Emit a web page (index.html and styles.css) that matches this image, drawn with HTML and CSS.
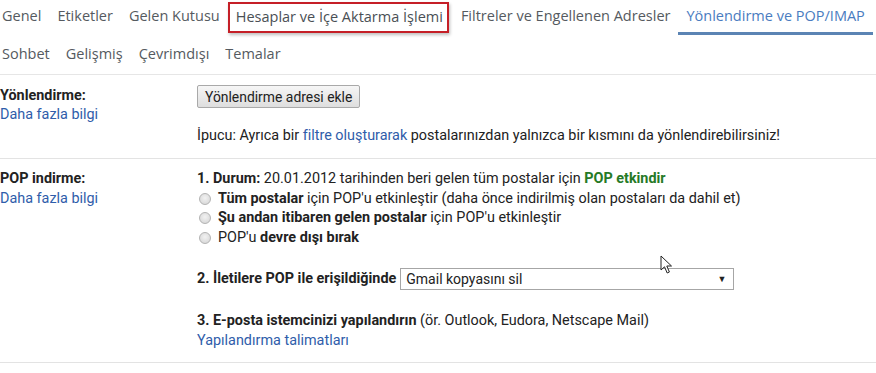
FILE: index.html
```html
<!DOCTYPE html>
<html lang="tr">
<head>
<meta charset="utf-8">
<title>Ayarlar</title>
<link rel="stylesheet" href="styles.css">
</head>
<body>
<div class="page">
  <nav class="tabs">
    <div class="tab-row first">
      <span class="tab">Genel</span>
      <span class="tab">Etiketler</span>
      <span class="tab">Gelen Kutusu</span>
      <span class="tab boxed">Hesaplar ve İçe Aktarma İşlemi</span>
      <span class="tab">Filtreler ve Engellenen Adresler</span>
      <span class="tab active">Yönlendirme ve POP/IMAP</span>
    </div>
    <div class="tab-row second">
      <span class="tab">Sohbet</span>
      <span class="tab">Gelişmiş</span>
      <span class="tab">Çevrimdışı</span>
      <span class="tab">Temalar</span>
    </div>
  </nav>

  <section class="setting fwd">
    <div class="label">
      <div class="title">Yönlendirme:</div>
      <a class="link">Daha fazla bilgi</a>
    </div>
    <div class="content">
      <button class="btn">Yönlendirme adresi ekle</button>
      <p class="tip">İpucu: Ayrıca bir <a class="link">filtre oluşturarak</a> postalarınızdan yalnızca bir kısmını da yönlendirebilirsiniz!</p>
    </div>
  </section>

  <section class="setting pop">
    <div class="label">
      <div class="title">POP indirme:</div>
      <a class="link">Daha fazla bilgi</a>
    </div>
    <div class="content">
      <div class="line"><b>1. Durum:</b> 20.01.2012 tarihinden beri gelen tüm postalar için <b class="ok">POP etkindir</b></div>
      <label class="radio"><span class="dot"></span><span><b>Tüm postalar</b> için POP'u etkinleştir (daha önce indirilmiş olan postaları da dahil et)</span></label>
      <label class="radio"><span class="dot"></span><span><b>Şu andan itibaren gelen postalar</b> için POP'u etkinleştir</span></label>
      <label class="radio"><span class="dot"></span><span>POP'u <b>devre dışı bırak</b></span></label>

      <div class="step2">
        <b>2. İletilere POP ile erişildiğinde</b>
        <div class="select"><span>Gmail kopyasını sil</span><span class="caret">▼</span></div>
      </div>

      <div class="step3">
        <div class="line"><b>3. E-posta istemcinizi yapılandırın</b> (ör. Outlook, Eudora, Netscape Mail)</div>
        <a class="link">Yapılandırma talimatları</a>
      </div>
    </div>
  </section>

  <svg class="cursor" width="13" height="20" viewBox="0 0 13 20" aria-hidden="true">
    <path d="M1 1 L1 15 L4.5 11.8 L7.2 18 L9.4 17 L6.8 11 L11.5 11 Z" fill="#fff" stroke="#222" stroke-width="1" stroke-linejoin="round"/>
  </svg>
</div>
</body>
</html>
```

FILE: styles.css
```css
* { box-sizing: border-box; }

html, body {
  margin: 0;
  padding: 0;
  background: #ffffff;
}

body {
  font-family: Roboto, "Liberation Sans", Arial, sans-serif;
  font-size: 14.4px;
  color: #222222;
}

.page {
  position: relative;
  width: 876px;
  height: 373px;
  overflow: hidden;
}

/* Tabs */
.tabs {
  border-bottom: 1px solid #e6e6e6;
}

.tab-row {
  display: flex;
  margin-left: -6px;
  font-family: "Open Sans", Roboto, sans-serif;
  font-size: 14.5px;
  color: #555a60;
}

.tab-row.first {
  height: 35px;
  align-items: stretch;
}

.tab-row.second {
  height: 39px;
  align-items: center;
  padding-bottom: 3px;
}

.tab {
  padding: 0 8px;
  display: flex;
  align-items: center;
  white-space: nowrap;
}

.tab-row.first .tab {
  padding-bottom: 2px;
  border-bottom: 3px solid transparent;
}

.tab.active {
  color: #4a7cc0;
  border-bottom-color: #5b84b4 !important;
}

.tab.boxed {
  margin: 2px 4px 2px 0;
  padding: 0 4px 0 6px;
  border: 2px solid #c51f27 !important;
  box-shadow: 1px 2px 3px rgba(0, 0, 0, 0.25);
  color: #4a4f55;
}

/* Settings rows */
.setting {
  display: grid;
  grid-template-columns: 197px 1fr;
  border-bottom: 1px solid #e3e3e3;
  line-height: 20px;
}

.fwd {
  padding: 11px 0 12px;
}

.pop {
  padding: 10px 0 11px;
}

.label .title {
  font-weight: bold;
  color: #222;
}

.fwd .label .link {
  display: block;
  margin-top: -1px;
}

.link {
  color: #2f5daa;
  cursor: pointer;
}

.label .link {
  display: block;
}

.btn {
  font-family: Roboto, "Liberation Sans", Arial, sans-serif;
  font-size: 13.9px;
  color: #222;
  height: 23px;
  margin-top: -1px;
  padding: 0 7px;
  background: linear-gradient(#f6f6f6, #dedede);
  border: 1px solid #a9a9a9;
  border-radius: 2px;
  display: block;
}

.tip {
  margin: 18px 0 0;
}

.line {
  white-space: nowrap;
}

.ok {
  color: #267a26;
}

.radio {
  display: flex;
  align-items: center;
  gap: 7px;
  height: 19.5px;
  white-space: nowrap;
}

.dot {
  width: 12px;
  height: 12px;
  margin-left: 2px;
  border-radius: 50%;
  border: 1px solid #b3b3b3;
  background: radial-gradient(circle at 50% 40%, #f2f2f2 0%, #dcdcdc 70%, #cfcfcf 100%);
  flex: none;
}

.step2 {
  display: flex;
  align-items: center;
  gap: 4px;
  margin-top: 20px;
}

.select {
  width: 334px;
  height: 22px;
  border: 1px solid #a6a6a6;
  display: flex;
  align-items: center;
  justify-content: space-between;
  padding: 0 7px 0 5px;
  font-size: 14px;
  color: #222;
}

.caret {
  font-size: 9px;
  color: #222;
}

.step3 {
  margin-top: 21px;
}

.step3 .link {
  display: block;
}

.cursor {
  position: absolute;
  left: 660px;
  top: 255px;
}
```
